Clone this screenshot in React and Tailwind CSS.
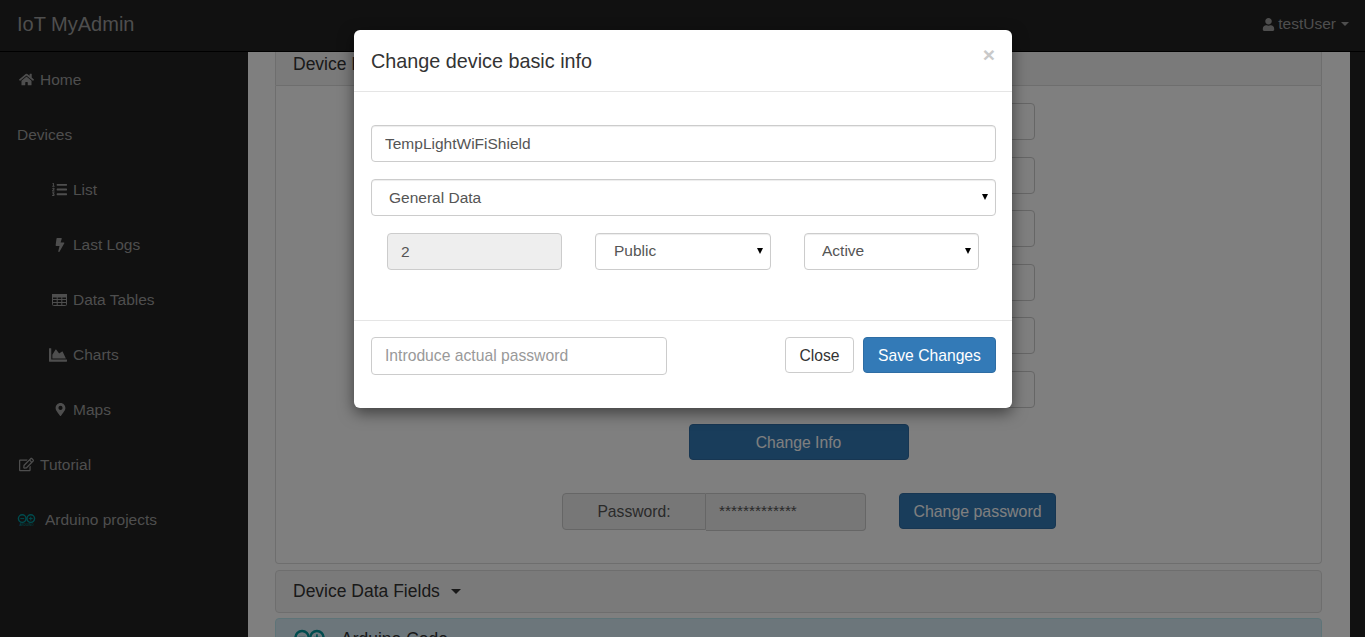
import { FaHome, FaListOl, FaBolt, FaChartArea, FaMapMarkerAlt, FaRegEdit, FaUser } from 'react-icons/fa';

// font-awesome 4 style table, the package one has a different grid
function TableIcon() {
  return (
    <svg viewBox="0 0 15 12" className="h-[12px] w-[15px]" fill="none" stroke="currentColor" strokeWidth="1">
      <rect x="0.5" y="0.5" width="14" height="11" rx="1" />
      <rect x="0.5" y="0.5" width="14" height="2.5" fill="currentColor" />
      <path d="M0.5 5.5h14M0.5 8.5h14M5.2 3v8.5M9.8 3v8.5" />
    </svg>
  );
}

const SUB_ITEMS = [
  { icon: FaListOl, label: 'List', size: 'text-[15px]' },
  { icon: FaBolt, label: 'Last Logs', size: 'text-[14px]' },
  { icon: TableIcon, label: 'Data Tables', size: 'text-[14px]' },
  { icon: FaChartArea, label: 'Charts', size: 'text-[18px]' },
  { icon: FaMapMarkerAlt, label: 'Maps', size: 'text-[13px]' },
];

const FIELD_ROWS = [1, 2, 3, 4, 5, 6];

function ArduinoLogo({ className, label = true }) {
  return (
    <svg viewBox="0 0 40 26" className={className} fill="none" stroke="#00979c" strokeWidth="3">
      <circle cx="11" cy="10" r="8" />
      <circle cx="29" cy="10" r="8" />
      <path d="M7 10h8M25 10h8M29 6v8" strokeWidth="2" />
      {label && (
        <text x="20" y="25.5" textAnchor="middle" fontSize="6.5" fontFamily="Liberation Sans" fill="#00979c" stroke="none">
          ARDUINO
        </text>
      )}
    </svg>
  );
}

function Sidebar() {
  return (
    <aside className="w-[248px] shrink-0 text-[15.5px] text-[#9d9d9d]">
      <div className="flex h-[55px] items-center pl-[19px]">
        <FaHome className="mr-[6px] text-[15px]" />
        Home
      </div>
      <div className="flex h-[55px] items-center pl-[17px]">Devices</div>
      {SUB_ITEMS.map(item => (
        <div key={item.label} className="flex h-[55px] items-center">
          <span className={`flex w-[73px] shrink-0 justify-end pr-[6px] ${item.size}`}>
            <item.icon />
          </span>
          {item.label}
        </div>
      ))}
      <div className="flex h-[55px] items-center pl-[19px]">
        <FaRegEdit className="mr-[6px] text-[15px]" />
        Tutorial
      </div>
      <div className="flex h-[55px] items-center pl-[17px]">
        <ArduinoLogo className="mr-[9px] h-[14px] w-[19px]" />
        Arduino projects
      </div>
    </aside>
  );
}

function DeviceForm() {
  return (
    <div className="h-[478px] rounded-b border-x border-b border-[#ddd] pt-[17px] text-[15.7px]">
      <div className="mx-auto flex w-[473px] flex-col gap-[16.6px]">
        {FIELD_ROWS.map(row => (
          <div key={row} className="h-[37px] rounded border border-[#ccc] bg-white" />
        ))}
      </div>
      <div className="mt-[16px] flex justify-center">
        <button className="h-[36px] w-[220px] rounded border border-[#2e6da4] bg-[#337ab7] pt-px text-white">Change Info</button>
      </div>
      <div className="ml-[286px] mt-[33px] flex">
        <div className="flex h-[37px] w-[144px] items-center justify-center rounded-l border border-[#ccc] bg-[#eee] pt-px text-[#555]">
          Password:
        </div>
        <div className="h-[38px] w-[160px] rounded-r border border-l-0 border-[#ccc] bg-[#eee] pl-[13px] pt-[5px] text-[15.4px] text-[#555]">
          *************
        </div>
        <button className="ml-[33px] h-[36px] w-[157px] rounded border border-[#2e6da4] bg-[#337ab7] pt-px text-[15.9px] text-white">
          Change password
        </button>
      </div>
    </div>
  );
}

function Select({ label, className, padding }) {
  return (
    <div className={`relative h-[37px] ${className}`}>
      <select className={`h-full w-full appearance-none rounded border border-[#ccc] bg-white shadow-[inset_0_1px_1px_rgba(0,0,0,0.075)] ${padding}`}>
        <option>{label}</option>
      </select>
      <span className="absolute right-[8px] top-[15px] h-0 w-0 border-x-[3px] border-t-[6px] border-x-transparent border-t-black" />
    </div>
  );
}

function Modal() {
  return (
    <div className="ml-[354px] mt-[30px] h-[378px] w-[658px] rounded-md bg-white text-[15.5px] text-[#555] shadow-[0_5px_15px_rgba(0,0,0,0.5)]">
      <div className="relative flex h-[62px] items-center border-b border-[#e5e5e5] pl-[17px] pt-[2px] text-[19.8px] text-[#333]">
        Change device basic info
        <span className="absolute right-[17px] top-[12px] text-[21px] font-bold leading-[26px] text-[#c9c9c9]">×</span>
      </div>
      <div className="flex h-[229px] flex-col gap-[17px] border-b border-[#e5e5e5] pl-[17px] pr-[16px] pt-[33px]">
        <input
          readOnly
          value="TempLightWiFiShield"
          className="h-[37px] w-full rounded border border-[#ccc] px-[13px] shadow-[inset_0_1px_1px_rgba(0,0,0,0.075)] outline-none"
        />
        <Select label="General Data" className="w-full" padding="px-[17px]" />
        <div className="flex pl-[16px]">
          <input
            readOnly
            value="2"
            className="h-[37px] w-[175px] rounded border border-[#ccc] bg-[#eee] px-[13px] outline-none"
          />
          <Select label="Public" className="ml-[33px] w-[176px]" padding="px-[18px] pb-[2px]" />
          <Select label="Active" className="ml-[33px] w-[175px]" padding="px-[17px] pb-[2px]" />
        </div>
      </div>
      <div className="flex items-start pl-[17px] pr-[16px] pt-[16px] text-[15.7px]">
        <input
          readOnly
          placeholder="Introduce actual password"
          className="h-[38px] w-[296px] rounded border border-[#ccc] px-[13px] pb-px outline-none placeholder:text-[#999]"
        />
        <button className="ml-auto h-[36px] w-[69px] rounded border border-[#ccc] bg-white pt-px text-[#333]">Close</button>
        <button className="ml-[9px] h-[36px] w-[133px] rounded border border-[#2e6da4] bg-[#337ab7] pt-px text-white">Save Changes</button>
      </div>
    </div>
  );
}

export default function App() {
  return (
    <div className="relative h-[637px] overflow-hidden bg-[#222] font-['Liberation_Sans',Arial,sans-serif] text-[15px]">
      {/* Navbar */}
      <header className="flex h-[52px] items-center justify-between border-b border-black pb-[3px] pl-[17px] pr-[16px] text-[#9d9d9d]">
        <span className="text-[20px]">IoT MyAdmin</span>
        <span className="flex items-center text-[15.5px]">
          <FaUser className="mr-[3px] text-[13px]" />
          testUser
          <span className="ml-[5px] h-0 w-0 border-x-[4px] border-t-[4px] border-x-transparent border-t-[#9d9d9d]" />
        </span>
      </header>

      <div className="flex h-[585px]">
        <Sidebar />

        <main className="w-[1102px] shrink-0 overflow-hidden bg-white pl-[27px] pr-[28px] text-[#333]">
          {/* Device info panel, scrolled under the navbar */}
          <div className="-mt-[10px] flex h-[44px] items-center rounded-t border border-[#ddd] bg-[#f5f5f5] pl-[17px] text-[17.5px]">
            Device Info
          </div>
          <DeviceForm />

          <div className="mt-[6px] flex h-[43px] items-center rounded border border-[#ddd] bg-[#f5f5f5] pl-[17px] text-[17.5px]">
            Device Data Fields
            <span className="ml-[11px] h-0 w-0 border-x-[5px] border-t-[5px] border-x-transparent border-t-[#333]" />
          </div>

          <div className="mt-[5px] flex h-[43px] items-center rounded border border-[#bce8f1] bg-[#d9edf7] pl-[17px] text-[17.5px]">
            <ArduinoLogo className="mr-[15px] h-[24px] w-[33px]" />
            Arduino Code
          </div>
        </main>
      </div>

      {/* Modal backdrop */}
      <div className="absolute inset-0 bg-black/50">
        <Modal />
      </div>
    </div>
  );
}
